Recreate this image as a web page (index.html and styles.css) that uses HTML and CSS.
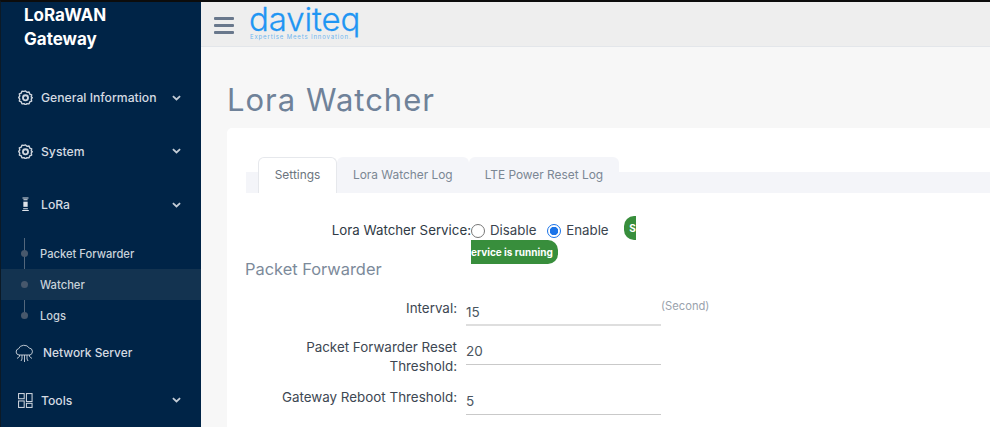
FILE: index.html
```html
<!DOCTYPE html>
<html lang="en">
<head>
<meta charset="utf-8">
<title>Lora Watcher</title>
<link rel="stylesheet" href="styles.css">
</head>
<body>
<div class="app">
  <aside class="sidebar">
    <div class="brand">LoRaWAN<br>Gateway</div>
    <nav class="nav">
      <div class="nav-item">
        <svg class="ico" viewBox="0 0 16 16" fill="none" stroke="#cfd6de" stroke-width="1.500" stroke-linejoin="round"><path d="M8 1l1.600 1.500 2.200-.3.7 2.100 2.100.9-.5 2.100L15.200 8l-1.100 1.700.5 2.100-2.100.9-.7 2.100-2.200-.3L8 15.800l-1.600-1.300-2.200.3-.7-2.100-2.100-.9.5-2.100L.8 8l1.100-1.700-.5-2.100 2.100-.9.7-2.100 2.200.3z"/><circle cx="8" cy="8.300" r="2.700" stroke-width="2"/></svg>
        <span class="nav-label">General Information</span>
        <svg class="chev" viewBox="0 0 10 6" fill="none" stroke="#c3ccd6" stroke-width="2"><path d="M1 1l4 3.600L9 1"/></svg>
      </div>
      <div class="nav-item">
        <svg class="ico" viewBox="0 0 16 16" fill="none" stroke="#cfd6de" stroke-width="1.500" stroke-linejoin="round"><path d="M8 1l1.600 1.500 2.200-.3.7 2.100 2.100.9-.5 2.100L15.200 8l-1.100 1.700.5 2.100-2.100.9-.7 2.100-2.200-.3L8 15.800l-1.600-1.300-2.200.3-.7-2.100-2.100-.9.5-2.100L.8 8l1.100-1.700-.5-2.100 2.100-.9.7-2.100 2.200.3z"/><circle cx="8" cy="8.300" r="2.700" stroke-width="2"/></svg>
        <span class="nav-label">System</span>
        <svg class="chev" viewBox="0 0 10 6" fill="none" stroke="#c3ccd6" stroke-width="2"><path d="M1 1l4 3.600L9 1"/></svg>
      </div>
      <div class="nav-item">
        <svg class="ico" viewBox="0 0 16 16" fill="none" stroke="#dfe4ea" stroke-width="1.100"><path d="M4.800 1h6.400M5.800 3h4.400"/><rect x="5.700" y="5" width="4.600" height="5.500" fill="#dfe4ea" stroke="none"/><path d="M5.500 12.500h5M4.500 14.500h7"/></svg>
        <span class="nav-label">LoRa</span>
        <svg class="chev" viewBox="0 0 10 6" fill="none" stroke="#c3ccd6" stroke-width="2"><path d="M1 1l4 3.600L9 1"/></svg>
      </div>
      <ul class="subnav">
        <li class="sub-item">Packet Forwarder</li>
        <li class="sub-item active">Watcher</li>
        <li class="sub-item">Logs</li>
      </ul>
      <div class="nav-item net">
        <svg class="ico-cloud" viewBox="0 0 19 19" fill="none" stroke="#cfd6de" stroke-width=".9"><path d="M4 11A3.200 3.200 0 0 1 3.600 4.700 A5.700 4.800 0 0 1 14.200 4 A3.600 3.600 0 0 1 15 11Z"/><path d="M9.500 11v7M7 11v4l-1 2M12 11v4l1 2M4.500 11v1.500l-2.500 2M14.500 11v1.500l2.500 2"/></svg>
        <span class="nav-label">Network Server</span>
      </div>
      <div class="nav-item tools">
        <svg class="ico" viewBox="0 0 16 16" fill="none" stroke="#cfd6de" stroke-width="1.100"><rect x=".6" y=".6" width="6" height="5.500"/><rect x="9" y=".6" width="6" height="8.500"/><rect x=".6" y="8.500" width="6" height="6.900"/><rect x="9" y="11" width="6" height="4.400"/></svg>
        <span class="nav-label">Tools</span>
        <svg class="chev" viewBox="0 0 10 6" fill="none" stroke="#c3ccd6" stroke-width="2"><path d="M1 1l4 3.600L9 1"/></svg>
      </div>
    </nav>
  </aside>
  <div class="main">
    <header class="topbar">
      <div class="burger"><i></i><i></i><i></i></div>
      <div class="logo">
        <span class="logo-name">daviteq</span>
        <span class="logo-tag">Expertise Meets Innovation.</span>
      </div>
    </header>
    <main class="content">
      <h1 class="page-title">Lora Watcher</h1>
      <section class="card">
        <div class="tabs">
          <div class="tab active">Settings</div>
          <div class="tab">Lora Watcher Log</div>
          <div class="tab">LTE Power Reset Log</div>
        </div>
        <div class="service-row">
          <div class="service-label">Lora Watcher Service:</div>
          <div class="service-value">
            <span class="radio"></span><span class="radio-text">Disable</span>
            <span class="radio on"></span><span class="radio-text">Enable</span>
            <span class="badge">Service is running</span>
          </div>
        </div>
        <h2 class="section-title">Packet Forwarder</h2>
        <div class="field">
          <label class="field-label">Interval:</label>
          <div class="field-input first">15</div>
          <span class="unit">(Second)</span>
        </div>
        <div class="field">
          <label class="field-label">Packet Forwarder Reset Threshold:</label>
          <div class="field-input">20</div>
        </div>
        <div class="field">
          <label class="field-label">Gateway Reboot Threshold:</label>
          <div class="field-input">5</div>
        </div>
      </section>
    </main>
  </div>
</div>
</body>
</html>
```
FILE: styles.css
```css
* { box-sizing: border-box; }
html, body { margin: 0; height: 100%; overflow: hidden; }
body {
  font-family: "Inter", "Open Sans", sans-serif;
  background: #f7f7f7;
  border-top: 2px solid #0c0c0c;
  border-left: 1px solid #0c1a26;
}
.app { display: grid; grid-template-columns: 200px 1fr; height: 425px; overflow: hidden; }

.sidebar { background: #002447; color: #d5dbe2; overflow: hidden; }
.brand {
  font-size: 17px; font-weight: 700; line-height: 24px; color: #fff;
  padding: 1px 0 0 23px; height: 69px;
}
.nav { display: flex; flex-direction: column; }
.nav-item {
  display: flex; align-items: center; height: 53.500px; flex: none;
  padding: 0 20px 0 17px; font-size: 12.200px; font-weight: 500;
}
.nav-item.net { height: 42px; padding-left: 14px; font-size: 11.900px; }
.nav-item.tools { height: 54px; }
.nav-label { flex: 1; margin-left: 8px; }
.net .nav-label { margin-left: 9px; }
.ico { width: 15px; height: 15px; flex: none; }
.ico-cloud { width: 19px; height: 19px; flex: none; margin-top: 3px; }
.chev { width: 9px; height: 6px; flex: none; }
.subnav {
  list-style: none; margin: 6.500px 0 0; padding: 0; position: relative;
}
.subnav::before {
  content: ""; position: absolute; left: 23px; top: 0; bottom: 15px;
  width: 1px; background: #53677c;
}
.sub-item {
  height: 31px; display: flex; align-items: center; padding-left: 39px;
  font-size: 11.200px; font-weight: 500; color: #c9d2da; position: relative;
}
.sub-item::before {
  content: ""; position: absolute; left: 20px; top: 12px;
  width: 7px; height: 7px; border-radius: 50%; background: #47586c;
}
.sub-item.active { background: #133350; }

.main { display: flex; flex-direction: column; min-width: 0; }
.topbar {
  height: 45px; background: #eeeeee; border-bottom: 1px solid #e3e6ea;
  display: flex; align-items: center; padding-left: 13px; flex: none;
}
.burger { display: flex; flex-direction: column; gap: 4px; width: 20px; margin: 3px 15px 0 0; }
.burger i { display: block; height: 3px; background: #69788c; border-radius: 1px; }
.logo { display: flex; flex-direction: column; align-items: flex-start; width: 108px; margin-top: -2px; }
.logo-name {
  font-family: "Inter", sans-serif; font-size: 33px; font-weight: 300; line-height: 31px;
  color: #1f96f3; letter-spacing: -.1px; -webkit-text-stroke: .3px #1f96f3;
}
.logo-tag {
  font-family: "Inter", sans-serif; font-size: 6px; color: #6fb6ee; letter-spacing: .85px;
  line-height: 7px; white-space: nowrap; margin: -2px 0 2px 1px;
}
.content { flex: 1; padding: 0 0 0 26px; min-height: 0; }
.page-title {
  margin: 0; font-size: 31px; font-weight: 400; color: #6f8299; letter-spacing: 1px;
  line-height: 40px; padding-top: 33px; height: 81px;
}
.card { background: #fff; border-radius: 5px 0 0 0; padding: 28px 0 0 19px; height: 330px; }
.tabs { display: flex; background: #f4f5f9; height: 21px; padding-left: 12px; margin-top: 16px; align-items: flex-end; }
.tab {
  height: 36px; padding: 0 16px 2px; display: flex; align-items: center; justify-content: center;
  font-size: 11.900px; color: #7b8794; background: #f4f5f9; border-radius: 6px 6px 0 0;
  flex: none;
}
.tab.active { width: 79px; padding: 0 0 2px; background: #fff; border: 1px solid #e6e8ec; border-bottom: 0; color: #6c757d; }
.service-row { display: grid; grid-template-columns: 225px 165px; margin-top: 25px; }
.service-label { font-size: 13.300px; color: #2f3a45; text-align: right; line-height: 24px; white-space: nowrap; }
.service-value { font-size: 13.300px; color: #3a444e; line-height: 24px; word-break: break-all; }
.radio {
  display: inline-block; width: 14px; height: 14px; border: 1px solid #777; border-radius: 50%;
  vertical-align: -3px; margin-right: 5px;
}
.radio.on { border: 1.500px solid #1a73e8; background: radial-gradient(circle, #1a73e8 0 4px, #fff 4.500px); }
.radio-text { margin-right: 7px; word-break: normal; }
.badge {
  background: #388e3c; color: #fff; font-size: 10px; font-weight: 700; line-height: 14px;
  padding: 6px 5px; border-radius: 10px; margin-left: 5px; vertical-align: 3px;
}
.section-title { margin: -8px 0 0 -1px; font-size: 16.400px; font-weight: 400; color: #7c8a9a; line-height: 22px; }
.field { display: grid; grid-template-columns: 180px 195px auto; column-gap: 9px; margin: 9px 0 0 31px; align-items: start; }
.section-title + .field { margin-top: 16px; }
.field-label { font-size: 13.400px; color: #3d4752; text-align: right; line-height: 19px; padding-top: 3px; }
.field-input {
  height: 30px; padding: 7px 0 0 0; font-size: 13.500px; color: #4a5560; line-height: 18px;
  border-bottom: 1px solid #c9c9c9;
}
.field-input.first { border-bottom: 2px solid #dedede; }
.unit { font-size: 11.200px; color: #9aa3ad; line-height: 14px; margin: 3px 0 0 -9px; }
```
